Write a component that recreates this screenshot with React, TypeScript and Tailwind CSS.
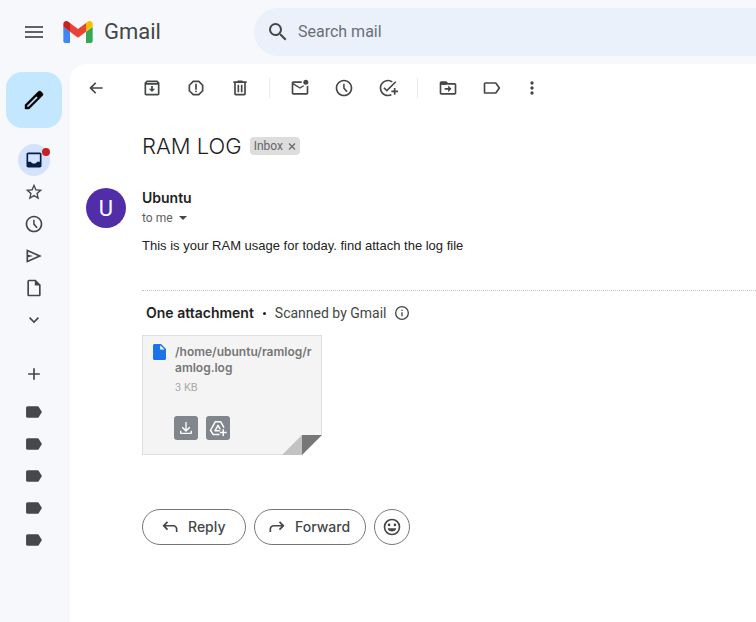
import type { ReactNode } from "react";

type IconProps = { children: ReactNode; className?: string };

/* 24-unit icons, drawn at 20px unless a size is given */
function Icon({ children, className = "size-5" }: IconProps) {
  return (
    <svg viewBox="0 0 24 24" className={`${className} shrink-0`} fill="currentColor" aria-hidden="true">
      {children}
    </svg>
  );
}

const clockPath =
  "M11.99 2C6.47 2 2 6.48 2 12s4.47 10 9.99 10C17.52 22 22 17.52 22 12S17.52 2 11.99 2zM12 20c-4.42 0-8-3.58-8-8s3.58-8 8-8 8 3.58 8 8-3.58 8-8 8zm.8-13H11v5.6l3.9 4.5 1.5-1.2-3.6-4.1z";

const MenuIcon = () => <Icon className="size-6"><path d="M3 18h18v-2H3v2zm0-5h18v-2H3v2zm0-7v2h18V6H3z" /></Icon>;
const SearchIcon = () => (
  <Icon className="size-6">
    <path d="M15.5 14h-.79l-.28-.27A6.471 6.471 0 0 0 16 9.5 6.5 6.5 0 1 0 9.5 16c1.61 0 3.09-.59 4.23-1.57l.27.28v.79l5 4.99L20.49 19l-4.99-5zm-6 0C7.01 14 5 11.99 5 9.5S7.01 5 9.5 5 14 7.01 14 9.5 11.99 14 9.5 14z" />
  </Icon>
);
const PencilIcon = () => (
  <Icon className="size-6">
    <path
      stroke="currentColor"
      strokeWidth=".4"
      fillRule="evenodd"
      d="M20.41 4.94l-1.35-1.35c-.78-.78-2.05-.78-2.83 0L3 16.82V21h4.18L20.41 7.77c.79-.78.79-2.05 0-2.83zM6.41 19.060L5 19v-1.360l9.400-9.400 1.410 1.410z"
    />
  </Icon>
);
const BackIcon = () => <Icon><path d="M20 11H7.83l4.59-4.59L11 5l-7 7 7 7 1.41-1.41L7.83 13H20v-2z" /></Icon>;
const ArchiveIcon = () => (
  <Icon>
    <path fillRule="evenodd" d="M5.6 3h12.8L21 5.6V19c0 1.1-.9 2-2 2H5c-1.100 0-2-.9-2-2V5.600zM5 8v11h14V8zM6 5.200h12v.8H6z" />
    <path d="M11 9.500h2V13h2.800L12 16.800 8.200 13H11z" />
  </Icon>
);
const SpamIcon = () => (
  <Icon>
    <path d="M15.730 3H8.270L3 8.270v7.460L8.270 21h7.460L21 15.730V8.270L15.730 3zM19 14.900L14.900 19H9.100L5 14.900V9.100L9.100 5h5.800L19 9.100v5.800z" />
    <circle cx="12" cy="16" r="1.100" />
    <path d="M11 7h2v7h-2z" />
  </Icon>
);
const TrashIcon = () => (
  <Icon>
    <path d="M15 4V3H9v1H4v2h1v13c0 1.100.9 2 2 2h10c1.100 0 2-.9 2-2V6h1V4h-5zm2 15H7V6h10v13z" />
    <path d="M9 8h2v9H9zM13 8h2v9h-2z" />
  </Icon>
);
const UnreadIcon = () => (
  <Icon>
    <path d="M22 8.980V18c0 1.100-.9 2-2 2H4c-1.100 0-2-.9-2-2V6c0-1.100.9-2 2-2h10.100c-.06.320-.1.660-.1 1s.04.680.1 1H4l8 5 3.670-2.290c.470.430 1.020.760 1.630.980L12 13 4 8v10h16V9.900c.740-.150 1.420-.480 2-.920z" />
    <circle cx="19" cy="5" r="3" />
  </Icon>
);
const ClockIcon = () => <Icon><path d={clockPath} /></Icon>;
const TaskIcon = () => (
  <Icon>
    <path d="M22 5.180L10.590 16.600l-4.240-4.240 1.410-1.410 2.830 2.830 10-10L22 5.180zM12 20c-4.410 0-8-3.590-8-8s3.590-8 8-8c1.570 0 3.040.460 4.280 1.250l1.450-1.450A10.020 10.020 0 0 0 12 2C6.480 2 2 6.480 2 12s4.480 10 10 10c1.730 0 3.360-.440 4.780-1.220l-1.500-1.500c-1 .460-2.110.720-3.280.720zm7-5h-3v2h3v3h2v-3h3v-2h-3v-3h-2v3z" />
  </Icon>
);
const MoveIcon = () => (
  <Icon>
    <path d="M20 6h-8l-2-2H4c-1.100 0-2 .9-2 2v12c0 1.100.9 2 2 2h16c1.100 0 2-.9 2-2V8c0-1.100-.9-2-2-2zm0 12H4V8h16v10z" />
    <path d="M12.200 9l4 4-4 4v-3H8v-2h4.200zM4 5h6v3H4z" />
  </Icon>
);
const LabelIcon = () => (
  <Icon>
    <path d="M17.630 5.840C17.270 5.330 16.670 5 16 5H4C2.900 5 2 5.900 2 7v10c0 1.100.9 2 2 2h12c.670 0 1.270-.330 1.630-.840L22 12l-4.370-6.160zM16 17H4V7h12l3.550 5L16 17z" />
  </Icon>
);
const MoreIcon = () => (
  <Icon>
    <circle cx="12" cy="6" r="2" />
    <circle cx="12" cy="12" r="2" />
    <circle cx="12" cy="18" r="2" />
  </Icon>
);
const InboxIcon = () => (
  <Icon>
    <path fillRule="evenodd" d="M19 3H5c-1.100 0-2 .9-2 2v14c0 1.100.9 2 2 2h14c1.100 0 2-.9 2-2V5c0-1.100-.9-2-2-2zm0 11h-3.200c-.6 1.200-2 2.200-3.800 2.200S8.800 15.200 8.200 14H5V5h14z" />
  </Icon>
);
const StarIcon = () => (
  <Icon>
    <path d="M22 9.240l-7.190-.620L12 2 9.190 8.630 2 9.240l5.460 4.730L5.820 21 12 17.270 18.180 21l-1.630-7.030L22 9.240zM12 15.400l-3.760 2.270 1-4.280-3.320-2.880 4.380-.380L12 6.100l1.710 4.040 4.380.380-3.320 2.880 1 4.280L12 15.400z" />
  </Icon>
);
const SendIcon = () => (
  <Icon>
    <path fillRule="evenodd" d="M3 4v16l18.500-8zM5 7l11.500 5L5 17v-3.500l6-1.500-6-1.500z" />
  </Icon>
);
const DraftIcon = () => (
  <Icon>
    <path fillRule="evenodd" d="M14 2H6c-1.100 0-2 .9-2 2v16c0 1.100.9 2 2 2h12c1.100 0 2-.9 2-2V8zM6 4h7v5h5v11H6z" />
  </Icon>
);
const ChevronIcon = () => <Icon><path d="M7.410 8.500L12 13.090l4.590-4.590L18 9.910l-6 6-6-6z" /></Icon>;
const PlusIcon = () => <Icon><path d="M19 13h-6v6h-2v-6H5v-2h6V5h2v6h6v2z" /></Icon>;
const TagIcon = () => (
  <Icon>
    <path d="M17.630 5.840C17.270 5.330 16.670 5 16 5H4.500C3.400 5 2.500 5.900 2.500 7v10c0 1.100.9 2 2 2H16c.670 0 1.270-.330 1.630-.840L21.500 12z" />
  </Icon>
);
const InfoIcon = () => (
  <Icon className="size-4">
    <path d="M11 7h2v2h-2zm0 4h2v6h-2zm1-9.500a10.500 10.500 0 1 0 0 21 10.500 10.500 0 0 0 0-21zm0 19a8.500 8.500 0 1 1 0-17 8.500 8.500 0 0 1 0 17z" />
  </Icon>
);
const ReplyIcon = () => (
  <Icon>
    <path d="M6.830 9.500l2.880-2.890L8.300 5.200l-5.300 5.300 5.300 5.300 1.410-1.410-2.880-2.890H16c1.700 0 3 1.200 3 3V18h2v-3.500c0-2.800-2.200-5-5-5z" />
  </Icon>
);
const ForwardIcon = () => (
  <Icon>
    <path d="M17.170 9.500l-2.880-2.890L15.700 5.200l5.300 5.300-5.300 5.300-1.410-1.410 2.880-2.890H8c-1.700 0-3 1.200-3 3V18H3v-3.500c0-2.800 2.200-5 5-5z" />
  </Icon>
);
const SmileIcon = () => (
  <Icon>
    <path d="M12 2a10 10 0 1 0 0 20 10 10 0 0 0 0-20zm0 18a8 8 0 1 1 0-16 8 8 0 0 1 0 16z" />
    <circle cx="8.500" cy="9.500" r="1.600" />
    <circle cx="15.500" cy="9.500" r="1.600" />
    <path d="M6.800 13.500h10.400a5.400 5.400 0 0 1-10.400 0z" />
  </Icon>
);
const DownloadIcon = () => (
  <Icon className="size-4">
    <path d="M17 10l-4 4V3h-2v11l-4-4-1.500 1.500L12 18l6.500-6.500zM3 16v3c0 1.100.9 2 2 2h14c1.100 0 2-.9 2-2v-3h-2v3H5v-3z" />
  </Icon>
);
const DriveAddIcon = () => (
  <Icon className="size-[18px]">
    <g fill="none" stroke="currentColor" strokeWidth="2" strokeLinejoin="round">
      <path d="M20 11.500L15.500 3.500h-7L2 15l3.300 5.500H14" />
      <path d="M14.500 15.500H8L12 8.500l3 5.200" />
      <path d="M19 13.500v9M14.500 18h9" strokeLinejoin="miter" />
    </g>
  </Icon>
);
const FileIcon = () => (
  <svg viewBox="0 0 13 16" className="h-4 w-[13px] shrink-0" aria-hidden="true">
    <path fill="#1a73e8" d="M1.500 0H8l5 5v9.500c0 .8-.7 1.500-1.500 1.500h-10C.7 16 0 15.300 0 14.500v-13C0 .7.7 0 1.500 0z" />
    <path fill="#fff" d="M7.200 1.200v4.300h4.300z" />
  </svg>
);
const GmailLogo = () => (
  <svg viewBox="52 42 88 66" className="h-[22px] w-[30px] shrink-0" aria-hidden="true">
    <path fill="#4285f4" d="M58 108h14V74L52 59v43c0 3.320 2.690 6 6 6" />
    <path fill="#34a853" d="M120 108h14c3.320 0 6-2.690 6-6V59l-20 15" />
    <path fill="#fbbc04" d="M120 48v26l20-15v-8c0-7.420-8.470-11.650-14.400-7.200" />
    <path fill="#ea4335" d="M72 74V48l24 18 24-18v26L96 92" />
    <path fill="#c5221f" d="M52 51v8l20 15V48l-5.600-4.200c-5.940-4.450-14.400-.220-14.400 7.200" />
  </svg>
);

function ToolButton({ label, children, narrow }: { label: string; children: ReactNode; narrow?: boolean }) {
  return (
    <button aria-label={label} className={`${narrow ? "w-9" : "w-11"} flex h-10 shrink-0 items-center justify-center`}>
      {children}
    </button>
  );
}

function Divider() {
  return <div className="mr-2 ml-[7px] h-5 w-px shrink-0 bg-[#e8eaed]" />;
}

function Header() {
  return (
    <header className="flex h-16 items-center">
      <div className="flex w-[254px] shrink-0 items-center">
        <button aria-label="Main menu" className="ml-[22px] text-[#5f6368]"><MenuIcon /></button>
        <a href="#" className="ml-[17px] flex items-center gap-[11px] text-[#444746]">
          <GmailLogo />
          <span className="text-[22px] leading-6">Gmail</span>
        </a>
      </div>
      <form className="flex h-12 min-w-0 flex-1 items-center rounded-l-full bg-[#eaf1fb] pl-3">
        <button type="button" aria-label="Search" className="text-[#444746]"><SearchIcon /></button>
        <input
          aria-label="Search mail"
          placeholder="Search mail"
          className="ml-2 min-w-0 flex-1 bg-transparent text-base outline-none placeholder:text-[#6b6f73]"
        />
      </form>
    </header>
  );
}

const folders = [
  { name: "Starred", icon: <StarIcon /> },
  { name: "Snoozed", icon: <ClockIcon /> },
  { name: "Sent", icon: <SendIcon /> },
  { name: "Drafts", icon: <DraftIcon /> },
];
const labels = ["Label 1", "Label 2", "Label 3", "Label 4", "Label 5"];

function Sidebar() {
  return (
    <nav className="flex w-[70px] shrink-0 flex-col items-center pt-2 pr-0.5 text-[#444746]">
      <button aria-label="Compose" className="flex size-14 items-center justify-center rounded-2xl bg-[#c2e7ff] text-black">
        <PencilIcon />
      </button>
      <a href="#" aria-label="Inbox" className="relative mt-4 flex size-8 items-center justify-center rounded-full bg-[#d3e3fd] text-[#041e49]">
        <InboxIcon />
        <span className="absolute top-1 right-0 size-2 rounded-full bg-[#c5221f]" />
      </a>
      {folders.map((f) => (
        <a key={f.name} href="#" aria-label={f.name} className="flex size-8 items-center justify-center">{f.icon}</a>
      ))}
      <button aria-label="More" className="flex size-8 items-center justify-center"><ChevronIcon /></button>
      <button aria-label="Create new label" className="mt-[22px] mb-[6px] flex size-8 items-center justify-center"><PlusIcon /></button>
      {labels.map((l) => (
        <a key={l} href="#" aria-label={l} className="flex size-8 items-center justify-center text-[#47484b]"><TagIcon /></a>
      ))}
    </nav>
  );
}

function Toolbar() {
  return (
    <div className="flex h-12 items-center pl-1 text-[#444746]">
      <div className="mr-3"><ToolButton label="Back to Inbox"><BackIcon /></ToolButton></div>
      <ToolButton label="Archive"><ArchiveIcon /></ToolButton>
      <ToolButton label="Report spam"><SpamIcon /></ToolButton>
      <ToolButton label="Delete"><TrashIcon /></ToolButton>
      <Divider />
      <ToolButton label="Mark as unread"><UnreadIcon /></ToolButton>
      <ToolButton label="Snooze"><ClockIcon /></ToolButton>
      <ToolButton label="Add to Tasks"><TaskIcon /></ToolButton>
      <Divider />
      <ToolButton label="Move to"><MoveIcon /></ToolButton>
      <ToolButton label="Labels"><LabelIcon /></ToolButton>
      <ToolButton label="More" narrow><MoreIcon /></ToolButton>
    </div>
  );
}

function Attachment() {
  return (
    <div className="relative mt-3 h-[120px] w-[180px] border border-[#e0e0e0] bg-[#f4f4f4] pt-2 pr-2 pl-[10px]">
      <div className="flex gap-[9px]">
        <FileIcon />
        <div className="min-w-0">
          <a href="#" className="block font-['Inter','Roboto',sans-serif] text-xs leading-4 font-semibold break-all text-[#777]">/home/ubuntu/ramlog/ramlog.log</a>
          <p className="mt-1 text-[11px] leading-4 text-[#aaa]">3 KB</p>
        </div>
      </div>
      <div className="mt-[20px] ml-[21px] flex gap-2 text-white">
        <button aria-label="Download" className="flex size-6 items-center justify-center rounded-[3px] bg-[#80868b]"><DownloadIcon /></button>
        <button aria-label="Add to Drive" className="flex size-6 items-center justify-center rounded-[3px] bg-[#80868b]"><DriveAddIcon /></button>
      </div>
      <svg viewBox="0 0 40 20" className="absolute -right-px -bottom-px h-5 w-10" aria-hidden="true">
        <path fill="#fff" d="M40 0v20H20z" />
        <path fill="#c2c2c2" d="M0 20L20 0v20z" />
        <path fill="#777" d="M20 0h20L20 20z" />
      </svg>
    </div>
  );
}

function Message() {
  return (
    <article className="flex pl-4">
      <div className="mt-[76px] flex size-10 shrink-0 items-center justify-center rounded-full bg-[#512da8] text-[22px] text-white">U</div>
      <div className="ml-4 min-w-0 flex-1">
        <div className="mt-5 flex h-7 items-center gap-2">
          <h1 className="font-['Inter','Roboto',sans-serif] text-[22px] leading-7 font-light text-[#1f1f1f]">RAM LOG</h1>
          <span className="flex h-[18px] items-center gap-[5px] rounded bg-[#ddd] px-1 text-xs text-[#666]">
            Inbox
            <button aria-label="Remove label Inbox">
              <svg viewBox="0 0 8 8" className="size-2" fill="none" stroke="currentColor" strokeWidth="1.200" aria-hidden="true">
                <path d="M1 1.500l6 6M7 1.500l-6 6" />
              </svg>
            </button>
          </span>
        </div>
        <h2 className="mt-7 font-['Inter','Roboto',sans-serif] text-sm leading-5 font-semibold text-[#1f1f1f]">Ubuntu</h2>
        <button className="flex h-5 items-center gap-1.5 text-xs text-[#5e5e5e]">
          to me
          <svg viewBox="0 0 8 4" className="h-1 w-2" fill="#444746" aria-hidden="true"><path d="M0 0h8L4 4z" /></svg>
        </button>
        <p className="mt-2 font-['Liberation_Sans',Arial,sans-serif] text-[13px] leading-5 text-[#222]">
          This is your RAM usage for today. find attach the log file
        </p>
        <section className="mt-[34px] border-t border-dotted border-[#c4c4c4] pt-3">
          <div className="flex h-5 items-center pl-1 text-sm text-[#444746]">
            <h3 className="font-['Inter','Roboto',sans-serif] font-semibold text-[#1f1f1f]">One attachment</h3>
            <span className="mx-[9px] size-[3px] rounded-full bg-[#1f1f1f]" />
            <span>Scanned by Gmail</span>
            <button aria-label="About scanning" className="ml-2"><InfoIcon /></button>
          </div>
          <Attachment />
        </section>
        <div className="mt-[54px] flex gap-2 font-['Inter','Roboto',sans-serif] text-sm font-medium text-[#444746]">
          <button className="flex h-9 w-[104px] items-center gap-2 rounded-full border border-[#747775] pl-[17px]"><ReplyIcon />Reply</button>
          <button className="flex h-9 w-28 items-center gap-2 rounded-full border border-[#747775] pl-3"><ForwardIcon />Forward</button>
          <button aria-label="Add reaction" className="flex size-9 items-center justify-center rounded-full border border-[#747775]"><SmileIcon /></button>
        </div>
      </div>
    </article>
  );
}

export default function App() {
  return (
    <div className="flex min-h-screen flex-col bg-[#f6f8fc] font-['Roboto','Liberation_Sans',sans-serif]">
      <Header />
      <div className="flex flex-1">
        <Sidebar />
        <main className="min-w-0 flex-1 rounded-tl-2xl bg-white">
          <Toolbar />
          <Message />
        </main>
      </div>
    </div>
  );
}
